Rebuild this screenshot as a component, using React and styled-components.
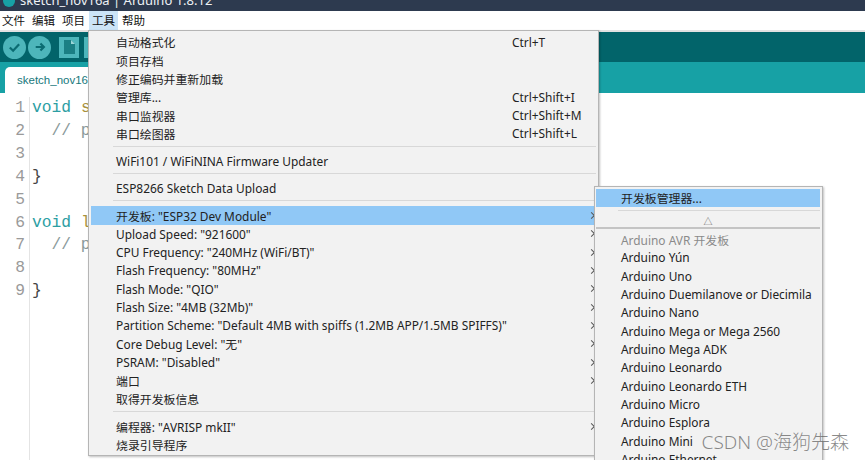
import React from 'react'
import styled, { createGlobalStyle } from 'styled-components'

const GlobalStyle = createGlobalStyle`
  html, body {
    margin: 0;
    padding: 0;
    background: #fff;
    overflow: hidden;
  }
`

const Window = styled.div`
  position: relative;
  width: 865px;
  height: 460px;
  overflow: hidden;
  background: #fff;
  font-family: "Noto Sans", "Noto Sans CJK SC", sans-serif;
  color: #222;
`

const TitleBar = styled.div`
  display: flex;
  align-items: flex-end;
  gap: 5px;
  height: 11px;
  padding: 0 0 4px 3px;
  box-sizing: border-box;
  background: #2d3a4f;
  color: #eef1f4;
  font-size: 13px;
  line-height: 13px;
  overflow: hidden;
  white-space: nowrap;
`

const TitleIcon = styled.span`
  width: 12px;
  height: 12px;
  border-radius: 50%;
  background: #17a1a5;
  flex: none;
`

const MenuBar = styled.div`
  display: flex;
  height: 19px;
  border-bottom: 2px solid #e2e2e2;
  background: #fff;
  font-size: 11.5px;
  line-height: 19px;
  color: #111;
`

const MenuTitle = styled.div`
  width: 26px;
  margin-right: 1px;
  padding-left: 3px;
  background: ${p => (p.$open ? '#cce4f7' : 'transparent')};

  &:first-child {
    margin-left: -1px;
  }
`

const Toolbar = styled.div`
  display: flex;
  align-items: center;
  gap: 2px;
  height: 30px;
  padding-left: 3px;
  background: #02646a;
`

const RoundButton = styled.div`
  display: flex;
  align-items: center;
  justify-content: center;
  width: 23px;
  height: 23px;
  border-radius: 50%;
  background: #4db6bb;
  color: #0b6c72;
`

const SquareButton = styled.div`
  display: flex;
  flex: none;
  align-items: center;
  justify-content: center;
  width: 20px;
  height: 21px;
  margin-left: ${p => p.$gap}px;
  background: #4db6bb;
`

const TabBar = styled.div`
  display: flex;
  align-items: flex-end;
  height: 31px;
  padding-left: 5px;
  background: #17a1a5;
`

const Tab = styled.div`
  width: 120px;
  height: 26px;
  padding-left: 12px;
  border-radius: 5px 0 0 0;
  background: #fff;
  color: #17787c;
  font-family: "Liberation Sans", sans-serif;
  font-size: 11.5px;
  line-height: 26px;
`

const Editor = styled.div`
  display: flex;
  padding-top: 4px;
  font-family: "Liberation Mono", monospace;
  font-size: 16.3px;
  line-height: 22.9px;
`

const Gutter = styled.div`
  width: 25px;
  height: 400px;
  padding-right: 4px;
  border-right: 1px solid #e4e4e4;
  color: #9a9a9a;
  text-align: right;
`

const Code = styled.pre`
  margin: 0 0 0 2px;
  font: inherit;
  color: #444;
`

const Keyword = styled.span`
  color: #2d9ea3;
`

const FunctionName = styled.span`
  color: #a8913c;
`

const Comment = styled.span`
  color: #8a9a9b;
`

const Popup = styled.div`
  position: absolute;
  left: 88px;
  top: 30px;
  width: 511px;
  height: 426px;
  padding: 1.5px 2px 2px;
  box-sizing: border-box;
  overflow: hidden;
  border: 1px solid #b5b5b5;
  background: #f2f2f2;
  box-shadow: 1px 1px 2px rgba(0, 0, 0, 0.25);
  font-size: 11.9px;
  color: #222;
`

const SubPopup = styled(Popup)`
  left: 594px;
  top: 186px;
  width: 229px;
  height: 290px;
  padding: 1.5px 2px 2px 1px;
`

const Item = styled.div`
  display: flex;
  align-items: center;
  height: 18.35px;
  padding-left: 25px;
  white-space: nowrap;
  background: ${p => (p.$active ? '#90c8f6' : 'transparent')};
  color: ${p => (p.$muted ? '#8a8a8a' : '#222')};
`

const Shortcut = styled.span`
  position: absolute;
  left: 423px;
`

const Chevron = styled.span`
  position: absolute;
  right: 4px;
  width: 4px;
  height: 4px;
  border-top: 1px solid #555;
  border-right: 1px solid #555;
  transform: rotate(45deg);
`

const Divider = styled.div`
  height: 1px;
  margin: 3px 0 5px 22px;
  background: #d8d8d8;
`

const Scroller = styled.div`
  display: flex;
  align-items: center;
  justify-content: center;
  height: 11px;
  margin-bottom: 1px;
  border-bottom: 2px solid #c4c4c4;
  color: #666;
  font-size: 9px;
`

const Watermark = styled.div`
  position: absolute;
  right: 16px;
  top: 430px;
  font-size: 19px;
  line-height: 24px;
  font-weight: 300;
  color: rgba(100, 100, 100, 0.75);
  white-space: nowrap;
`

const toolsTop = [
  ['自动格式化', 'Ctrl+T'],
  ['项目存档'],
  ['修正编码并重新加载'],
  ['管理库...', 'Ctrl+Shift+I'],
  ['串口监视器', 'Ctrl+Shift+M'],
  ['串口绘图器', 'Ctrl+Shift+L'],
]

const boardOptions = [
  ['Upload Speed: "921600"', true],
  ['CPU Frequency: "240MHz (WiFi/BT)"', true],
  ['Flash Frequency: "80MHz"', true],
  ['Flash Mode: "QIO"', true],
  ['Flash Size: "4MB (32Mb)"', true],
  ['Partition Scheme: "Default 4MB with spiffs (1.2MB APP/1.5MB SPIFFS)"', true],
  ['Core Debug Level: "无"', true],
  ['PSRAM: "Disabled"', true],
  ['端口', true],
  ['取得开发板信息'],
]

const boards = [
  'Arduino Yún',
  'Arduino Uno',
  'Arduino Duemilanove or Diecimila',
  'Arduino Nano',
  'Arduino Mega or Mega 2560',
  'Arduino Mega ADK',
  'Arduino Leonardo',
  'Arduino Leonardo ETH',
  'Arduino Micro',
  'Arduino Esplora',
  'Arduino Mini',
  'Arduino Ethernet',
]

export default function App() {
  return (
    <Window>
      <GlobalStyle />
      <TitleBar>
        <TitleIcon />
        <span>sketch_nov16a | Arduino 1.8.12</span>
      </TitleBar>
      <MenuBar>
        <MenuTitle>文件</MenuTitle>
        <MenuTitle>编辑</MenuTitle>
        <MenuTitle>项目</MenuTitle>
        <MenuTitle $open>工具</MenuTitle>
        <MenuTitle>帮助</MenuTitle>
      </MenuBar>
      <Toolbar>
        <RoundButton>
          <svg width="13" height="13" viewBox="0 0 14 14" fill="none" stroke="currentColor" strokeWidth="2.4">
            <path d="M2 7l3.5 3.5L12 3.5" />
          </svg>
        </RoundButton>
        <RoundButton>
          <svg width="12" height="12" viewBox="0 0 14 14" fill="none" stroke="currentColor" strokeWidth="2.6">
            <path d="M2 7h9M7.5 3l4 4-4 4" />
          </svg>
        </RoundButton>
        <SquareButton $gap={6}>
          <svg width="11" height="14" viewBox="0 0 11 14">
            <path d="M0 0h7l4 4v10H0z" fill="#1b7f84" />
            <path d="M7 0l4 4H7z" fill="#9ad6d8" />
          </svg>
        </SquareButton>
        <SquareButton $gap={3} />
      </Toolbar>
      <TabBar>
        <Tab>sketch_nov16a</Tab>
      </TabBar>
      <Editor>
        <Gutter>
          {[1, 2, 3, 4, 5, 6, 7, 8, 9].map(n => <div key={n}>{n}</div>)}
        </Gutter>
        <Code>
          <div><Keyword>void</Keyword> <FunctionName>setup</FunctionName>() {'{'}</div>
          <div><Comment>  // put</Comment></div>
          <div>&nbsp;</div>
          <div>{'}'}</div>
          <div>&nbsp;</div>
          <div><Keyword>void</Keyword> <FunctionName>loop</FunctionName>() {'{'}</div>
          <div><Comment>  // put</Comment></div>
          <div>&nbsp;</div>
          <div>{'}'}</div>
        </Code>
      </Editor>

      <Popup>
        {toolsTop.map(([label, shortcut]) => (
          <Item key={label}>
            {label}
            {shortcut && <Shortcut>{shortcut}</Shortcut>}
          </Item>
        ))}
        <Divider />
        <Item>WiFi101 / WiFiNINA Firmware Updater</Item>
        <Divider />
        <Item>ESP8266 Sketch Data Upload</Item>
        <Divider />
        <Item $active>
          开发板: "ESP32 Dev Module"
          <Chevron />
        </Item>
        {boardOptions.map(([label, more]) => (
          <Item key={label}>
            {label}
            {more && <Chevron />}
          </Item>
        ))}
        <Divider />
        <Item>
          编程器: "AVRISP mkII"
          <Chevron />
        </Item>
        <Item>烧录引导程序</Item>
      </Popup>

      <SubPopup>
        <Item $active>开发板管理器...</Item>
        <Divider />
        <Scroller>△</Scroller>
        <Item $muted>Arduino AVR 开发板</Item>
        {boards.map(name => (
          <Item key={name}>{name}</Item>
        ))}
      </SubPopup>

      <Watermark>CSDN @海狗先森</Watermark>
    </Window>
  )
}
